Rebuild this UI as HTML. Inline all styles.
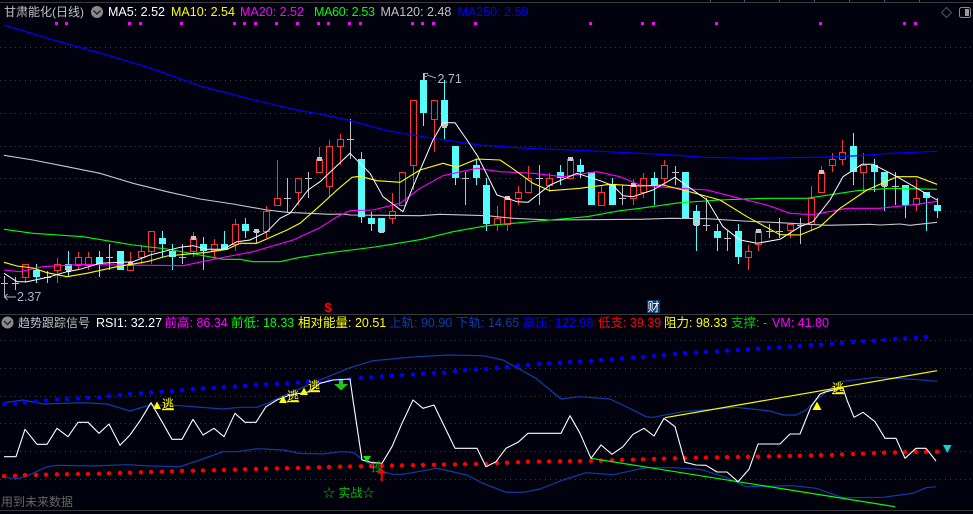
<!DOCTYPE html>
<html><head><meta charset="utf-8"><title>甘肃能化</title>
<style>
html,body{margin:0;padding:0;background:#02020f;overflow:hidden}
svg{display:block;font-family:"Liberation Sans","Noto Sans CJK SC",sans-serif;font-size:12.5px}
.c{font-size:12px}
</style></head>
<body>
<svg width="973" height="514" viewBox="0 0 973 514" xmlns="http://www.w3.org/2000/svg">
<rect width="973" height="514" fill="#02020f"/>
<!-- frame lines -->
<g shape-rendering="crispEdges" stroke="#3a3a3a" fill="none">
<path d="M0 2.5H973M0 314.5H973M0 510.5H973"/>
<path d="M710.5 0V2M744.5 0V2M779.5 0V2M814.5 0V2M849.5 0V2M884.5 0V2M919.5 0V2" stroke="#555"/>
</g>
<!-- grid -->
<g shape-rendering="crispEdges" stroke="#3c3c3c" stroke-dasharray="1 4" fill="none">
<path d="M0 47.5H973M0 80.5H973M0 113.5H973M0 146.5H973M0 178.5H973M0 211.5H973M0 244.5H973M0 277.5H973"/>
<path d="M0 340.5H973M0 368.5H973M0 396.5H973M0 423.5H973M0 451.5H973M0 479.5H973"/>
</g>
<!-- magenta marks -->
<path shape-rendering="crispEdges" fill="#ff00ff" d="M55 22h3v3h-3zM65 22h3v3h-3zM128 22h3v3h-3zM139 22h3v3h-3zM180 22h3v3h-3zM233 22h3v3h-3zM243 22h3v3h-3zM254 22h3v3h-3zM275 22h3v3h-3zM296 22h3v3h-3zM317 22h3v3h-3zM327 22h3v3h-3zM348 22h3v3h-3zM359 22h3v3h-3zM411 22h3v3h-3zM421 22h3v3h-3zM432 22h3v3h-3zM474 22h3v3h-3zM589 22h3v3h-3zM641 22h3v3h-3zM652 22h3v3h-3zM715 22h3v3h-3zM819 22h3v3h-3zM903 22h3v3h-3zM914 22h3v3h-3z"/>
<!-- red candles -->
<path shape-rendering="crispEdges" fill="none" stroke="#ff3232" d="M22.5 264.5h6v13h-6zM25.5 277.5V283M54.5 264.5h6v6h-6zM57.5 258V264M57.5 271V283M75.5 257.5h6v8h-6zM78.5 252V257M78.5 266V269M85.5 257.5h6v8h-6zM88.5 252V257M88.5 266V270M127.5 264.5h6v6h-6zM130.5 252V264M138.5 251.5h6v6h-6zM141.5 245V251M141.5 258V264M148.5 231.5h6v20h-6zM151.5 252V264M190.5 238.5h6v13h-6zM193.5 232V238M193.5 252V257M211.5 244.5h6v6h-6zM214.5 239V244M214.5 251V257M232.5 224.5h6v20h-6zM235.5 219V224M235.5 245V251M263.5 211.5h6v20h-6zM266.5 206V211M266.5 232V238M274.5 198.5h6v7h-6zM277.5 160V198M295.5 178.5h6v14h-6zM298.5 193V205M316.5 159.5h6v13h-6zM319.5 147V159M326.5 146.5h6v40h-6zM329.5 140V146M329.5 187V197M337.5 139.5h6v7h-6zM340.5 134V139M340.5 147V165M389.5 211.5h6v7h-6zM392.5 193V211M392.5 219V224M399.5 172.5h6v33h-6zM410.5 100.5h6v65h-6zM413.5 166V190M431.5 100.5h6v19h-6zM434.5 120V152M494.5 218.5h6v6h-6zM497.5 206V218M497.5 225V231M504.5 198.5h6v26h-6zM507.5 225V231M515.5 192.5h6v6h-6zM518.5 186V192M518.5 199V205M525.5 178.5h6v14h-6zM528.5 166V178M546.5 178.5h6v7h-6zM549.5 173V178M549.5 186V192M567.5 159.5h6v19h-6zM598.5 192.5h6v13h-6zM601.5 186V192M630.5 185.5h6v13h-6zM633.5 179V185M633.5 199V205M640.5 178.5h6v14h-6zM643.5 173V178M643.5 193V198M661.5 165.5h6v13h-6zM664.5 160V165M664.5 179V185M745.5 251.5h6v6h-6zM748.5 245V251M748.5 258V270M755.5 231.5h6v13h-6zM758.5 245V251M787.5 224.5h6v6h-6zM790.5 231V238M808.5 198.5h6v26h-6zM811.5 186V198M811.5 225V231M818.5 172.5h6v20h-6zM821.5 166V172M829.5 159.5h6v6h-6zM832.5 153V159M832.5 166V172M839.5 152.5h6v7h-6zM842.5 140V152M842.5 160V165M860.5 165.5h6v7h-6zM863.5 153V165M863.5 173V192M913.5 198.5h6v6h-6zM916.5 179V198M916.5 205V211"/>
<!-- cyan wicks -->
<path shape-rendering="crispEdges" fill="none" stroke="#54fcfc" d="M36.5 264V283M68.5 251V277M99.5 251V277M162.5 231V257M172.5 244V270M203.5 237V270M224.5 231V245M245.5 218V238M361.5 152V223M371.5 212V231M423.5 73V126M444.5 80V139M455.5 146V185M476.5 159V185M486.5 178V231M560.5 165V185M580.5 159V178M612.5 178V205M654.5 172V205M696.5 205V251M717.5 224V251M738.5 224V264M853.5 133V185M874.5 159V192M884.5 172V211M905.5 185V218M926.5 192V231M937.5 198V218"/>
<!-- cyan bodies -->
<path shape-rendering="crispEdges" fill="#54fcfc" d="M33 270h7v7h-7zM65 264h7v6h-7zM96 257h7v7h-7zM117 251h7v19h-7zM159 238h7v6h-7zM169 251h7v6h-7zM200 244h7v7h-7zM221 244h7v6h-7zM242 224h7v7h-7zM358 159h7v58h-7zM368 218h7v6h-7zM378 218h7v14h-7zM420 80h7v33h-7zM441 100h7v26h-7zM452 146h7v32h-7zM473 165h7v13h-7zM483 185h7v39h-7zM557 172h7v6h-7zM577 165h7v7h-7zM588 172h7v33h-7zM609 184h7v21h-7zM651 178h7v7h-7zM682 172h7v46h-7zM693 211h7v14h-7zM714 231h7v7h-7zM735 231h7v26h-7zM850 146h7v26h-7zM871 165h7v7h-7zM881 172h7v14h-7zM902 185h7v20h-7zM923 192h7v6h-7zM934 205h7v6h-7z"/>
<!-- gray crosses -->
<path shape-rendering="crispEdges" fill="none" stroke="#c0c0c0" d="M4.5 276V296M1 283.5H8M15.5 277V290M12 283.5H19M47.5 271V283M44 277.5H51M109.5 244V270M106 257.5H113M182.5 244V264M179 257.5H186M256.5 231V243M253 231.5H260M287.5 178V212M284 198.5H291M308.5 172V198M305 178.5H312M350.5 119V159M347 139.5H354M465.5 172V205M462 178.5H469M539.5 165V205M536 178.5H543M622.5 185V205M619 198.5H626M675.5 166V185M672 172.5H679M706.5 198V231M703 225.5H710M727.5 231V251M724 238.5H731M769.5 224V238M766 231.5H773M779.5 218V238M776 231.5H783M800.5 218V244M797 225.5H804M895.5 172V205M892 186.5H899"/>
<!-- gray patches -->
<path shape-rendering="crispEdges" fill="#c8c8c8" d="M66 268h5v4h-5zM128 262h5v4h-5zM191 236h5v4h-5zM254 229h5v4h-5zM317 157h5v4h-5zM379 229h5v4h-5zM442 124h5v4h-5zM505 196h5v4h-5zM568 157h5v4h-5zM631 183h5v4h-5zM694 222h5v4h-5zM756 229h5v4h-5zM819 170h5v4h-5zM882 183h5v4h-5z"/>
<!-- moving averages -->
<g fill="none" stroke-linejoin="round">
<polyline stroke="#0000ff" stroke-width="1.2" points="4,25 50,39 100,53 150,68 200,86 250,99 300,110.7 320,114 350,120.5 387,130.7 433,138.3 480,145 527,148.3 587,150.7 640,153.3 673,155 703,157.3 753,158.3 817,157.3 853,156 890,153.3 937,151.3"/>
<polyline stroke="#c8c8c8" stroke-width="1.1" points="4,155.3 33,160 67,166.7 100,173.3 133,183.3 167,191.7 200,199 233,204 267,210 287,212.3 330,214.3 343,214 350,215 420,215.7 440,214.3 487,215.7 513,218.3 550,220 640,219.3 670,218.3 707,218.7 743,221 780,222.7 827,225.3 870,224.3 880,225 900,224 910,225.3 937,222.3"/>
<polyline stroke="#00ff00" stroke-width="1.1" points="4,229.3 33,233.3 83,236.7 133,245 167,249 200,255 223,259.3 240,259.3 253,261.7 280,261.7 300,257.3 330,252.7 375,247 422,239.3 453,231.7 487,225.7 520,222.7 550,220 587,216.7 620,210.7 640,208.3 680,202.7 720,200 763,198.3 807,198.3 857,190.7 890,188.3 937,189.3"/>
<polyline stroke="#ff00ff" stroke-width="1.1" points="4,270 20,271.7 43,266.7 83,264.3 117,265 183,265.7 207,260.7 227,256.7 253,251.7 293,240 320,227.7 337,216.7 350,210.7 373,210 400,203.3 420,188.3 443,175.7 477,168.3 500,171.7 533,173.3 563,176.7 597,171.7 620,176.7 640,185 670,187.7 707,190 733,196.7 767,205 790,213.3 813,214.7 847,208.3 880,208.3 917,204.3 937,201.3"/>
<polyline stroke="#ffff00" stroke-width="1.1" points="4,262.3 17,266 33,268 47,272.7 67,276.7 87,273.3 117,266.7 147,261.7 167,256 207,252.3 227,249.3 240,243.3 257,243.3 287,230 300,223.3 320,205.7 337,190 352,177.3 360,176.3 377,180.7 400,182.3 420,170 443,163.3 457,167.3 477,159 500,160 510,166.7 533,183.3 550,190.7 580,188.3 610,184.3 640,186 663,185 683,190 720,200 747,216.7 780,234.7 800,235 820,226.7 840,208.3 867,190 897,176.7 917,176.7 937,184.3"/>
<polyline stroke="#ffffff" stroke-width="1" points="4,273.3 17,281.7 27,281.7 50,276.7 67,271.7 80,269.3 100,263.3 133,261.7 150,255 180,247.3 193,245.7 207,249.3 223,249.3 237,241.7 250,240 267,231.7 280,218.3 290,213.3 308,190 320,181.7 350,153.3 370,173.3 383,196.7 403,211.7 413,186.7 433,140 443,122.7 455,122.7 467,140 478,156.7 497,195 507,198.3 517,201.7 528,202.3 550,185 577,173.3 600,180.7 613,185.7 623,195.7 633,196.7 653,190 675,177.3 707,200 723,226.7 740,240 757,243.3 780,239.3 800,226.7 813,221.7 830,200 843,176.7 862,164.3 873,164.3 897,176.7 917,188.3 937,200"/>
</g>
<!-- high / low markers -->
<path fill="none" stroke="#b0b0b0" d="M4.5 283V297H16M4.5 297l3-3M4.5 297l3 3"/>
<path fill="none" stroke="#a8a8a8" d="M424.5 80V73.5H428M424.5 76.5H427M427 75l9 3"/>
<text x="17" y="301" fill="#a8b4c0">2.37</text>
<text x="437.5" y="83" fill="#b8bcc4">2.71</text>
<!-- lower pane: bands -->
<g fill="none" stroke="#0c3fa6" stroke-width="1.2" stroke-linejoin="round">
<polyline points="4,402.7 23,400 43,404 83,402.7 107,404 130,411 150,405 180,405.7 223,409 240,407.3 257,407.3 267,403.3 280,397.3 320,380 350,367.7 373,360.7 417,356.7 450,355 483,355.7 503,360 536,378.3 561,399 580,396.7 610,399 631,409 646,416.7 653,417.3 683,411.7 736,407.3 770,411 783,415 796,415 806,410 816,400 840,381.7 876,377.3 913,379.3 937,381.3"/>
<polyline points="4,477.3 17,478.7 27,476 47,466.7 57,465.3 93,466 127,464.7 150,466 180,466.7 200,460 223,451.7 237,451.7 257,448.7 283,450 300,453.3 323,454 340,451.7 353,452.3 363,460 383,471.7 393,474.3 403,474.3 437,468.3 467,475 483,483.3 506,492.3 523,492.3 540,489 563,480 586,472.7 613,474.7 646,467.7 673,467.7 700,469.3 726,477.3 746,486.7 793,485.7 816,488.3 843,497.7 883,497.3 913,493.3 926,487.7 936,486.7"/>
</g>
<!-- dots -->
<path fill="none" stroke="#0000ff" stroke-width="4.4" stroke-linecap="round" d="M4.500 404h.01M15 403.300h.01M25 402.500h.01M36 401.700h.01M46 400.700h.01M57 399.500h.01M67 399h.01M78 398.500h.01M88 398h.01M99 397.500h.01M109 396h.01M120 395h.01M130 394h.01M141 393.300h.01M151 392.500h.01M162 391.700h.01M172 391h.01M182 390h.01M193 389h.01M203 388.500h.01M214 388h.01M224 387h.01M235 386.500h.01M245 386h.01M256 385h.01M266 384.500h.01M277 384h.01M287 383.500h.01M298 382.500h.01M308 381.700h.01M319 381h.01M329 380.500h.01M340 380h.01M350 379h.01M361 378h.01M371 377.300h.01M382 376.500h.01M392 375.700h.01M402 375h.01M413 374.500h.01M423 373.700h.01M434 373h.01M444 372.700h.01M455 371h.01M465 370h.01M476 369.500h.01M486 369h.01M497 368h.01M507 367h.01M518 365.700h.01M528 365h.01M539 364h.01M549 363.300h.01M560 362.700h.01M570 362h.01M580 361.500h.01M591 361h.01M601 360h.01M612 359.300h.01M622 358.500h.01M633 357.700h.01M643 357h.01M654 356h.01M664 355h.01M675 354h.01M685 353.300h.01M696 352.700h.01M706 352h.01M717 351.300h.01M727 350.700h.01M738 350h.01M748 349.300h.01M758 348.700h.01M769 348h.01M779 347.300h.01M790 346.700h.01M800 346h.01M811 345.300h.01M821 344.700h.01M832 344h.01M842 343h.01M853 342h.01M863 341.300h.01M874 340.700h.01M884 340h.01M895 339h.01M905 338.300h.01M916 337.700h.01M926 337h.01"/>
<path fill="none" stroke="#ff0000" stroke-width="4.4" stroke-linecap="round" d="M4 476h.01M15 475.700h.01M25 475h.01M36 475h.01M46 474.700h.01M57 474.300h.01M67 474.200h.01M78 474h.01M88 473.900h.01M99 473.700h.01M109 473.300h.01M120 473h.01M130 472.700h.01M141 472.300h.01M151 472h.01M162 471.700h.01M172 471.300h.01M182 471h.01M193 470.700h.01M203 470.500h.01M214 470.200h.01M224 470h.01M235 469.700h.01M245 469.300h.01M256 469h.01M266 468.700h.01M277 468.400h.01M287 468.200h.01M298 468h.01M308 467.700h.01M319 467.300h.01M329 467h.01M340 466.700h.01M350 466.500h.01M361 466.300h.01M371 466.100h.01M382 466h.01M392 465.700h.01M402 465.500h.01M413 465.200h.01M423 465h.01M434 464.800h.01M444 464.600h.01M455 464.400h.01M465 464.200h.01M476 464.100h.01M486 464h.01M497 463h.01M507 462.700h.01M518 462.200h.01M528 461.700h.01M539 461.600h.01M549 461.500h.01M560 461.300h.01M570 461.200h.01M580 461.100h.01M591 461h.01M601 460.700h.01M612 460.300h.01M622 460h.01M633 459.700h.01M643 459.300h.01M654 459h.01M664 458.700h.01M675 458.300h.01M685 458h.01M696 457.800h.01M706 457.600h.01M717 457.400h.01M727 457.200h.01M738 457h.01M748 456.800h.01M758 456.700h.01M769 456.400h.01M779 456.200h.01M790 456h.01M800 455.700h.01M811 455.500h.01M821 455.200h.01M832 455h.01M842 454.500h.01M853 454h.01M863 453.700h.01M874 453.200h.01M884 452.700h.01M895 452.500h.01M905 452.200h.01M916 452h.01M926 451.700h.01M937 451.700h.01"/>
<!-- trend lines -->
<polyline fill="none" stroke="#ffff00" stroke-width="1.2" points="665,417.7 937,370.7"/>
<polyline fill="none" stroke="#00ff00" stroke-width="1.2" points="591,458.3 895,506.7"/>
<!-- RSI -->
<polyline fill="none" stroke="#ffffff" stroke-width="1.1" stroke-linejoin="round" points="4,456.7 16,456.7 25,429.3 37,444.3 47,444.3 57,428.3 68,436.7 78,422.3 88,422.3 99,433.3 109,424 120,445.3 130,435 141,419.3 151,402.7 162,421.7 172,439.3 182,439.3 193,419.3 203,435 214,428.3 224,436.7 235,413.3 245,422.3 256,422.3 266,406.7 277,400 290,395 310,391.7 320,383.3 333,380 350,379 353,400 362,460 371,462.3 382,463.3 392,446.7 402,423.3 413,400 423,408.3 434,405 455,448.3 477,448.3 486,466.7 496,461.7 506,448.3 518,442.3 528,433.3 561,433.3 570,415.7 580,433.3 591,458.3 601,445 612,454.3 623,446.7 633,434.3 644,428.3 654,436 664,418.3 675,426.7 685,462.3 696,465 706,465.3 717,472 727,472 738,481.7 749,469.3 758,444 780,444 790,434 800,434 811,406.7 820,394 826,391.7 843,388 847,400 854,417.3 863,412.3 875,421.7 885,438.3 896,438.3 905,458.3 916,448.3 926,448.3 936,461"/>
<!-- markers -->
<path fill="#ffff00" d="M157 401.500l4 7.500h-8zM283 395.500l4 7.500h-8zM304 387.500l4 7.500h-8zM817 401.500l4.500 8.500h-9z"/>
<path fill="#1fc41f" d="M339 380h4v4h5l-7 6.500-7-6.500h5z"/>
<path fill="#14e014" d="M363 456h8l-4 7z"/>
<path fill="#ff0000" d="M381.700 468.500l5 5h-4v7.500h-2v-7.500h-4z"/>
<path fill="#00dcc8" d="M943 445h8.500l-4.200 8z"/>
<g fill="#ffff00">
<text class="c" x="162" y="408" text-decoration="underline">逃</text>
<text class="c" x="287" y="400" text-decoration="underline">逃</text>
<text class="c" x="308" y="390" text-decoration="underline">逃</text>
<text class="c" x="832" y="392" text-decoration="underline">逃</text>
</g>
<text class="c" x="371" y="471" fill="#00c800">抄</text>
<text class="c" x="323" y="497" fill="#00c000">☆ 实战☆</text>
<text class="c" x="1" y="506" fill="#666666">用到未来数据</text>
<!-- $ and 财 -->
<text x="324.500" y="312" fill="#ff0000" font-weight="bold" style="font-size:13px">$</text>
<rect x="647" y="300" width="13" height="13" fill="#0a3a6a"/>
<text class="c" x="647.500" y="311" fill="#ffffff">财</text>
<!-- header -->
<text class="c" x="4" y="16" fill="#c0c0c0">甘肃能化(日线)</text>
<circle cx="97" cy="12" r="6" fill="#8a8a8a"/>
<path d="M93.500 10.500l3.500 3.500 3.500-3.500" fill="none" stroke="#26262a" stroke-width="1.500"/>
<text x="108" y="16" fill="#ffffff">MA5: 2.52</text>
<text x="171" y="16" fill="#ffff00">MA10: 2.54</text>
<text x="240" y="16" fill="#ff00ff">MA20: 2.52</text>
<text x="314" y="16" fill="#00ff00" textLength="61">MA60: 2.53</text>
<text x="380.500" y="16" fill="#c0c0c0">MA120: 2.48</text>
<text x="457.500" y="16" fill="#0000ff">MA250: 2.59</text>
<path d="M946.500 7.500l5 5-5 5-5-5z" fill="none" stroke="#555"/>
<rect x="959.500" y="7.500" width="11" height="10" rx="2" fill="none" stroke="#8a8a8a"/>
<rect x="965" y="9" width="4" height="7" fill="#9a9a9a"/>
<!-- lower header -->
<circle cx="7.500" cy="322.500" r="6" fill="#8a8a8a"/>
<path d="M4 321l3.500 3.500 3.500-3.500" fill="none" stroke="#26262a" stroke-width="1.500"/>
<text class="c" x="18" y="327" fill="#c0c0c0">趋势跟踪信号</text>
<text x="96" y="327" fill="#ffffff">RSI1: 32.27</text>
<text x="164.500" y="327" fill="#ff00ff">前高: 86.34</text>
<text x="231" y="327" fill="#00ff00">前低: 18.33</text>
<text x="298" y="327" fill="#ffff00">相对能量: 20.51</text>
<text x="389" y="327" fill="#0c3fa6">上轨: 90.90</text>
<text x="456" y="327" fill="#0c3fa6">下轨: 14.65</text>
<text x="523" y="327" fill="#0000ff">高压: 122.98</text>
<text x="598" y="327" fill="#ff0000">低支: 39.39</text>
<text x="664" y="327" fill="#ffff00">阻力: 98.33</text>
<text x="731" y="327" fill="#00c800">支撑: -</text>
<text x="772" y="327" fill="#ff00ff">VM: 41.80</text>
</svg>
</body></html>
